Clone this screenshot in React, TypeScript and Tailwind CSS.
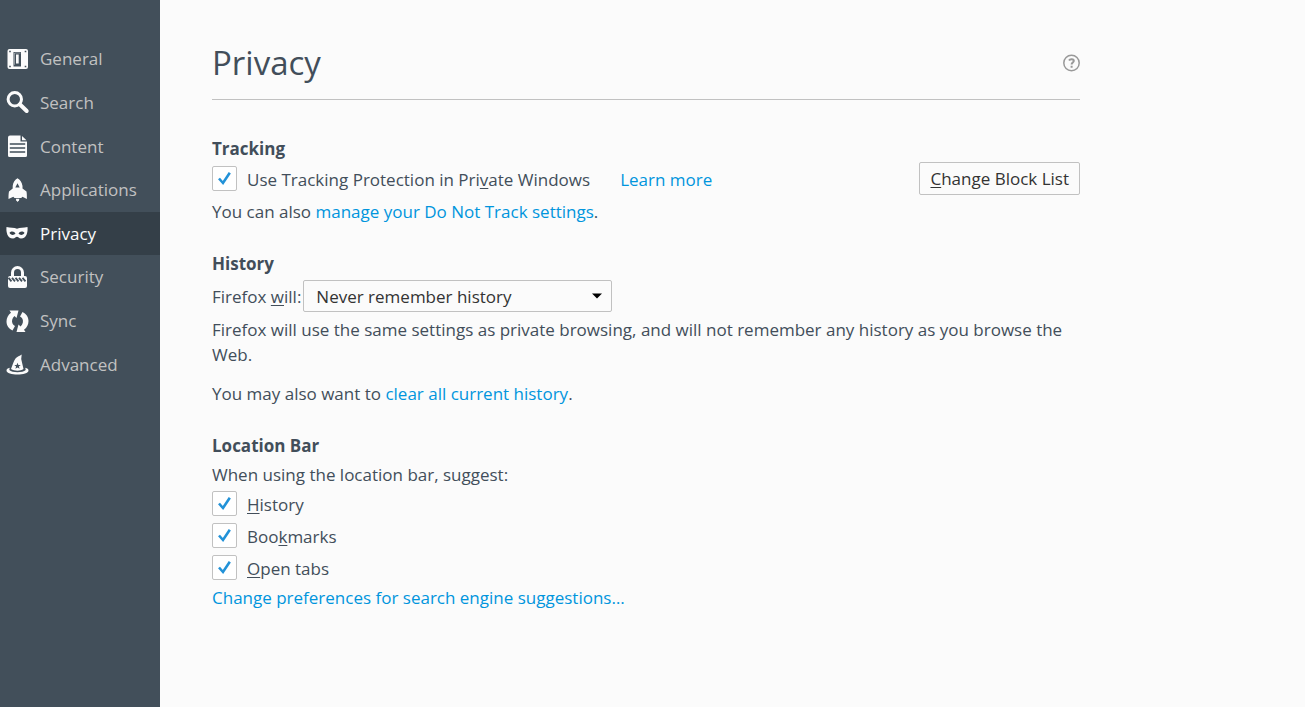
import type { ReactNode } from "react";

const icon = "size-6 shrink-0 fill-[#fbfbfb]";

function GeneralIcon() {
  return (
    <svg viewBox="0 0 24 24" className={icon} aria-hidden="true">
      <path
        fillRule="evenodd"
        d="M3.500 2h16.500a2 2 0 0 1 2 2v16a2 2 0 0 1-2 2H3.500a2 2 0 0 1-2-2V4a2 2 0 0 1 2-2zM3.200 3.700v1.600h1.600v-1.600zM18.700 3.700v1.600h1.600v-1.600zM3.200 18.700v1.600h1.600v-1.600zM18.700 18.700v1.600h1.600v-1.600zM7.500 5v14.500h7.500V5zM10 7.500h2.700v9H10z"
      />
      <path d="M8.500 17.800V6h6" className="fill-none stroke-[#fbfbfb]/60 stroke-[0.7]" />
    </svg>
  );
}

function SearchIcon() {
  return (
    <svg viewBox="0 0 24 24" className={icon} aria-hidden="true">
      <circle cx="8.800" cy="9.300" r="6.700" className="fill-none stroke-[#fbfbfb] stroke-3" />
      <path d="M14 14.500l6.700 6.500" className="stroke-[#fbfbfb] stroke-4" strokeLinecap="round" />
    </svg>
  );
}

function ContentIcon() {
  return (
    <svg viewBox="0 0 24 24" className={icon} aria-hidden="true">
      <path d="M4 1.500h10.500v6H21v14a1.500 1.500 0 0 1-1.500 1.500h-16A1.500 1.500 0 0 1 2 21.500v-18a2 2 0 0 1 2-2zM16 2L20.500 6.300H16z" />
      <path d="M3.800 10h15.400M3.800 14h15.400M3.800 18h15.400" className="stroke-[#424f5a] stroke-[1.7]" />
    </svg>
  );
}

function ApplicationsIcon() {
  return (
    <svg viewBox="0 0 24 24" className={icon} aria-hidden="true">
      <path
        fillRule="evenodd"
        d="M11.500 .3C14 1.800 16 4.500 16.500 8v2.500l4 3c.4 2 .4 5 .4 7.500l-4.500-2.200-1.200 1.200H8.500l-1.200-1.200L2.500 21c0-2.500 0-5.500.5-7.500l3.700-3V8C7 4.500 9 1.800 11.500 .3zM11.500 5.200L9.300 9.400h4.400z"
      />
      <path d="M9.800 20.700h3.600l-.4 1.500-1.400 1.800-1.400-1.800z" />
    </svg>
  );
}

function PrivacyIcon() {
  return (
    <svg viewBox="0 0 24 24" className={icon} aria-hidden="true">
      <path
        fillRule="evenodd"
        d="M.5 6c4 1.300 7.500 0 10.500 1.700C14 6 17.500 7.300 21.500 6c.5 5-.8 11.500-6.500 11.500-2 0-2.800-1.700-4-1.700s-2 1.700-4 1.700C1.300 17.500 0 11 .5 6zM3.500 11.800c1 2.700 4.700 2.700 6 .7-1.200-2.300-4.300-2.700-6-.7zM12.500 12.500c1.300 2 5 2 6-.7-1.700-2-4.800-1.600-6 .7z"
      />
    </svg>
  );
}

function SecurityIcon() {
  return (
    <svg viewBox="0 0 24 24" className={icon} aria-hidden="true">
      <path d="M6.500 12V7.500a5 5 0 0 1 10 0V12" className="fill-none stroke-[#fbfbfb] stroke-3" />
      <rect x="2" y="11" width="19" height="12" rx="2" />
      <path
        d="M2.500 12.800l3 3.500M6 12.800l3 3.500M9.500 12.800l3 3.500M13 12.800l3 3.500M16.500 12.800l3 3.500"
        className="stroke-[#424f5a] stroke-[1.8]"
      />
    </svg>
  );
}

function SyncIcon() {
  return (
    <svg viewBox="0 0 24 24" className={icon} aria-hidden="true">
      <path d="M3.500 1.500h9L10.500 9l-2-2C6 9 5.500 12.500 6.500 14.500 7 15.700 8 16.500 9 17l-2.500 4.500C3 20 .5 16.500 .5 12.500 .5 9 2 6 5 3.700z" />
      <path d="M19.500 22.900h-9l2-7.500 2 2c2.500-2 3-5.500 2-7.500-.5-1.200-1.500-2-2.500-2.500l2.500-4.500c3.500 1.500 6 5 6 9 0 3.500-1.500 6.500-4.500 8.800z" />
    </svg>
  );
}

function AdvancedIcon() {
  return (
    <svg viewBox="0 0 24 24" className={icon} aria-hidden="true">
      <path
        fillRule="evenodd"
        d="M15.700 2.500l-.5 4.500 2.300 10c-3 2.300-9 2.300-12.500 0C6.700 13 7.500 9 9.500 6.500c1.700-2 4.200-2.500 6.200-4zM11.500 10.800l-.9 2.200H8.300l1.800 1.500-.7 2.300 2.100-1.300 2.100 1.300-.7-2.300 1.800-1.500h-2.300z"
      />
      <path d="M3.700 15.800c-2 .4-3.200 1.300-3.200 2.700 0 5.300 22 5.300 22 0 0-1.400-1.200-2.300-3.200-2.700l.4 2.200c-3 3-13.400 3-16.400 0z" />
    </svg>
  );
}

const categories: { label: string; glyph: ReactNode }[] = [
  { label: "General", glyph: <GeneralIcon /> },
  { label: "Search", glyph: <SearchIcon /> },
  { label: "Content", glyph: <ContentIcon /> },
  { label: "Applications", glyph: <ApplicationsIcon /> },
  { label: "Privacy", glyph: <PrivacyIcon /> },
  { label: "Security", glyph: <SecurityIcon /> },
  { label: "Sync", glyph: <SyncIcon /> },
  { label: "Advanced", glyph: <AdvancedIcon /> },
];

function Key({ children }: { children: string }) {
  return <span className="underline decoration-1 underline-offset-2">{children}</span>;
}

function TextLink({ children }: { children: string }) {
  return (
    <a href="#" className="text-[#0095dd]">
      {children}
    </a>
  );
}

function Check({ id, children }: { id: string; children: ReactNode }) {
  return (
    <div className="flex items-center gap-[10px]">
      <span className="grid size-[25px] shrink-0">
        <input
          id={id}
          type="checkbox"
          defaultChecked
          className="peer col-start-1 row-start-1 size-full appearance-none rounded-xs border border-[#c1c1c1] bg-white"
        />
        <svg
          viewBox="0 0 25 25"
          aria-hidden="true"
          className="pointer-events-none invisible col-start-1 row-start-1 size-full fill-none stroke-[#2292d8] stroke-[2.6] peer-checked:visible"
        >
          <path d="M7 12.500l4 4.500L17.800 6.800" />
        </svg>
      </span>
      <label htmlFor={id} className="pt-0.5">
        {children}
      </label>
    </div>
  );
}

export default function App() {
  return (
    <div className="flex min-h-screen bg-[#fbfbfb] font-['Open_Sans','Noto_Sans',sans-serif] text-[17px] leading-[25px] text-[#424e5a]">
      <nav className="w-40 shrink-0 bg-[#424f5a] pt-[37px]">
        <ul className="grid h-[349px] grid-rows-8">
          {categories.map(({ label, glyph }) => (
            <li key={label}>
              <button
                type="button"
                aria-current={label === "Privacy" ? "page" : undefined}
                className="flex size-full items-center gap-[10px] pl-[6px] text-[#c1c1c1] aria-[current=page]:bg-[#343f48] aria-[current=page]:text-[#fbfbfb]"
              >
                {glyph}
                {label}
              </button>
            </li>
          ))}
        </ul>
      </nav>

      <main className="min-w-0 flex-1 px-[52px] pt-10">
        <div className="max-w-[868px]">
          <header className="flex items-center justify-between border-b border-[#c1c1c1] pb-[13px]">
            <h1 className="text-[33px] leading-[46px]">Privacy</h1>
            <button type="button" aria-label="Help">
              <svg viewBox="0 0 18 18" className="size-[18px] fill-none stroke-[#999] stroke-[1.5]" aria-hidden="true">
                <circle cx="9.500" cy="9" r="7.700" />
                <path d="M7 6.400C8 4.700 11.900 4.700 11.800 7c-.1 1.500-2.200 1.500-2.200 3.500M9.600 11.800v2" className="stroke-2" />
              </svg>
            </button>
          </header>

          <section className="mt-9">
            <h2 className="font-bold">Tracking</h2>
            <div className="mt-px flex items-center justify-between">
              <div className="flex items-center gap-[30px]">
                <Check id="tracking">
                  Use Tracking Protection in Pri<Key>v</Key>ate Windows
                </Check>
                <p className="pt-0.5">
                  <TextLink>Learn more</TextLink>
                </p>
              </div>
              <button
                type="button"
                className="h-[33px] rounded-xs border border-[#c1c1c1] px-[10px] text-[#333]"
              >
                <Key>C</Key>hange Block List
              </button>
            </div>
            <p className="mt-1">
              You can also <TextLink>manage your Do Not Track settings</TextLink>.
            </p>
          </section>

          <section className="mt-[27px]">
            <h2 className="font-bold">History</h2>
            <div className="mt-1 flex items-center gap-0.5">
              <label htmlFor="history-mode">
                Firefox <Key>w</Key>ill:
              </label>
              <div className="grid w-[309px]">
                <select
                  id="history-mode"
                  className="col-start-1 row-start-1 h-8 appearance-none rounded-xs border border-[#c1c1c1] px-3 text-[#333]"
                >
                  <option>Never remember history</option>
                </select>
                <svg
                  viewBox="0 0 10 6"
                  aria-hidden="true"
                  className="pointer-events-none col-start-1 row-start-1 mr-[10px] h-[6px] w-[10px] self-center justify-self-end fill-black"
                >
                  <path d="M0 .5h10L5 5.500z" />
                </svg>
              </div>
            </div>
            <p className="mt-[5px]">
              Firefox will use the same settings as private browsing, and will not remember any history as you browse
              the Web.
            </p>
            <p className="mt-[14px]">
              You may also want to <TextLink>clear all current history</TextLink>.
            </p>
          </section>

          <section className="mt-[27px]">
            <h2 className="font-bold">Location Bar</h2>
            <p className="mt-1">When using the location bar, suggest:</p>
            <div className="mt-[3px] flex flex-col gap-[5px]">
              <Check id="suggest-history">
                <Key>H</Key>istory
              </Check>
              <Check id="suggest-bookmarks">
                Boo<Key>k</Key>marks
              </Check>
              <Check id="suggest-tabs">
                <Key>O</Key>pen tabs
              </Check>
            </div>
            <p className="mt-1">
              <TextLink>Change preferences for search engine suggestions…</TextLink>
            </p>
          </section>
        </div>
      </main>
    </div>
  );
}
